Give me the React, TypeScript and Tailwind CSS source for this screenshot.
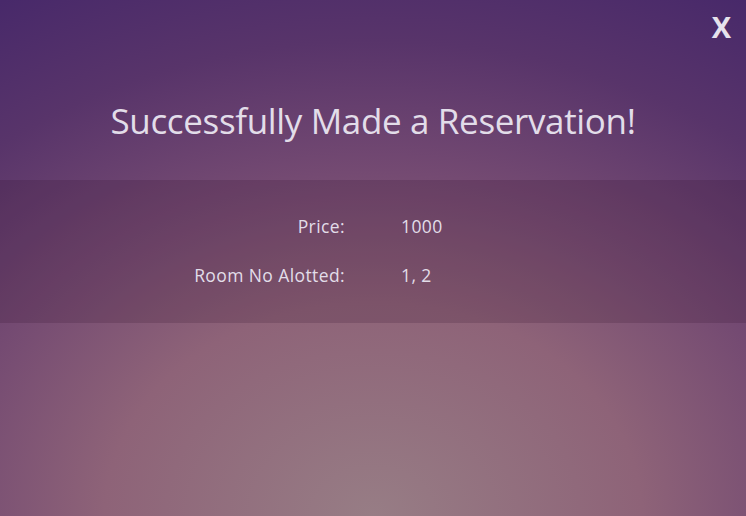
export default function App() {
  const rows = [
    { label: "Price:", value: "1000" },
    { label: "Room No Alotted:", value: "1, 2" },
  ];

  return (
    <div
      className="relative w-full h-[516px] overflow-hidden text-[#e2dde9]"
      style={{
        fontFamily: '"Open Sans", "Noto Sans", sans-serif',
        background:
          "radial-gradient(ellipse 100% 115% at 50% 100%, #977d85 0%, #8e6378 36%, #744a72 58%, #58346a 80%, #48296a 100%)",
      }}
    >
      <button className="absolute top-[12px] right-[15px] text-[29px] font-bold leading-none text-[#e6e2ec]">
        X
      </button>

      <div className="h-[180px] flex items-center justify-center pt-[60px]">
        <h1 className="text-[35px] leading-none font-normal tracking-[-0.35px]">
          Successfully Made a Reservation!
        </h1>
      </div>

      <div className="h-[143px] bg-[rgba(45,10,40,0.18)] pt-[35px]">
        <div className="grid grid-cols-2 gap-x-[56px] gap-y-[27px] text-[17.5px] leading-[22px] tracking-[0.4px]">
          {rows.map((r) => (
            <div key={r.label} className="contents">
              <div className="text-right">{r.label}</div>
              <div>{r.value}</div>
            </div>
          ))}
        </div>
      </div>
    </div>
  );
}
